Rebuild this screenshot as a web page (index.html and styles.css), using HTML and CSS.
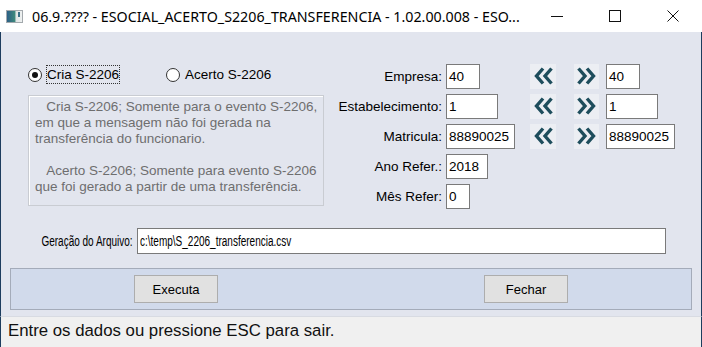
FILE: index.html
```html
<!DOCTYPE html>
<html lang="pt">
<head>
  <meta charset="UTF-8">
  <title>ESOCIAL_ACERTO_S2206_TRANSFERENCIA</title>
  <link rel="stylesheet" href="styles.css">
</head>
<body>
  <div class="window">
    <div class="titlebar">
      <span class="app-icon"><span class="icon-bar"></span></span>
      <span class="title">06.9.???? - ESOCIAL_ACERTO_S2206_TRANSFERENCIA - 1.02.00.008 - ESO...</span>
      <div class="caption-btns">
        <span class="cap-btn">
          <svg width="12" height="12" viewBox="0 0 12 12"><path d="M0 6.5h12" stroke="#111" stroke-width="1"/></svg>
        </span>
        <span class="cap-btn">
          <svg width="12" height="12" viewBox="0 0 12 12"><rect x="0.5" y="0.5" width="11" height="11" fill="none" stroke="#111" stroke-width="1"/></svg>
        </span>
        <span class="cap-btn">
          <svg width="12" height="12" viewBox="0 0 12 12"><path d="M0.5 0.5l11 11M11.5 0.5l-11 11" stroke="#111" stroke-width="1"/></svg>
        </span>
      </div>
    </div>

    <div class="client">
      <div class="top">
        <div class="left">
          <div class="radios">
            <label class="radio">
              <span class="dot checked"></span>
              <span class="radio-text focus">Cria S-2206</span>
            </label>
            <label class="radio">
              <span class="dot"></span>
              <span class="radio-text">Acerto S-2206</span>
            </label>
          </div>
          <div class="memo">
            <p>&nbsp;&nbsp;&nbsp;Cria S-2206; Somente para o evento S-2206,<br>em que a mensagem não foi gerada na<br>transferência do funcionario.</p>
            <p>&nbsp;&nbsp;&nbsp;Acerto S-2206; Somente para evento S-2206<br>que foi gerado a partir de uma transferência.</p>
          </div>
        </div>

        <div class="form">
          <span class="lbl">Empresa:</span>
          <span class="field w34">40</span>
          <span class="arrow prev"><svg width="21" height="18" viewBox="0 0 21 18"><path d="M10 1.5L3.5 9l6.5 7.5M18.5 1.5L12 9l6.5 7.5" fill="none" stroke="#1e4d5c" stroke-width="3.4"/></svg></span>
          <span class="arrow next"><svg width="21" height="18" viewBox="0 0 21 18"><path d="M2.5 1.5L9 9l-6.5 7.5M11 1.5L17.5 9 11 16.5" fill="none" stroke="#1e4d5c" stroke-width="3.4"/></svg></span>
          <span class="field to w34">40</span>

          <span class="lbl">Estabelecimento:</span>
          <span class="field w52">1</span>
          <span class="arrow prev"><svg width="21" height="18" viewBox="0 0 21 18"><path d="M10 1.5L3.5 9l6.5 7.5M18.5 1.5L12 9l6.5 7.5" fill="none" stroke="#1e4d5c" stroke-width="3.4"/></svg></span>
          <span class="arrow next"><svg width="21" height="18" viewBox="0 0 21 18"><path d="M2.5 1.5L9 9l-6.5 7.5M11 1.5L17.5 9 11 16.5" fill="none" stroke="#1e4d5c" stroke-width="3.4"/></svg></span>
          <span class="field to w52">1</span>

          <span class="lbl">Matricula:</span>
          <span class="field w69">88890025</span>
          <span class="arrow prev"><svg width="21" height="18" viewBox="0 0 21 18"><path d="M10 1.5L3.5 9l6.5 7.5M18.5 1.5L12 9l6.5 7.5" fill="none" stroke="#1e4d5c" stroke-width="3.4"/></svg></span>
          <span class="arrow next"><svg width="21" height="18" viewBox="0 0 21 18"><path d="M2.5 1.5L9 9l-6.5 7.5M11 1.5L17.5 9 11 16.5" fill="none" stroke="#1e4d5c" stroke-width="3.4"/></svg></span>
          <span class="field to w69">88890025</span>

          <span class="lbl">Ano Refer.:</span>
          <span class="field w42">2018</span>
          <span class="filler"></span>

          <span class="lbl">Mês Refer:</span>
          <span class="field w24">0</span>
          <span class="filler"></span>
        </div>
      </div>

      <div class="file-row">
        <span class="file-lbl"><span class="narrow right">Geração do Arquivo:</span></span>
        <span class="field file"><span class="narrow">c:\temp\S_2206_transferencia.csv</span></span>
      </div>

      <div class="btn-panel">
        <button class="btn">Executa</button>
        <button class="btn">Fechar</button>
      </div>
    </div>

    <div class="status">Entre os dados ou pressione ESC para sair.</div>
  </div>
</body>
</html>
```

FILE: styles.css
```css
body {
  margin: 0;
  font-family: "Liberation Sans", Arial, sans-serif;
}

.window {
  width: 702px;
  height: 347px;
  display: flex;
  flex-direction: column;
  overflow: hidden;
}

/* Title bar */
.titlebar {
  height: 32px;
  background: #fff;
  display: flex;
  align-items: center;
  flex-shrink: 0;
}

.app-icon {
  width: 15px;
  height: 11px;
  margin-left: 6px;
  margin-right: 9px;
  border: 1px solid #a3a9ad;
  background: linear-gradient(90deg, #2c5f86 0%, #3f8a7c 55%, #dfe4e4 58%, #eef1f1 100%);
  position: relative;
}

.icon-bar {
  position: absolute;
  right: 2px;
  top: 1px;
  width: 2px;
  height: 5px;
  background: #3a6f86;
}

.title {
  font-family: "Noto Sans", sans-serif;
  font-size: 14.25px;
  color: #000;
  white-space: nowrap;
}

.caption-btns {
  margin-left: auto;
  display: flex;
  height: 100%;
}

.cap-btn {
  width: 58px;
  display: flex;
  align-items: center;
  justify-content: center;
}

/* Client area */
.client {
  flex: 1;
  background: #e2e5ee;
  border-left: 1px solid #1d3d5e;
  border-right: 1px solid #1d3d5e;
  display: flex;
  flex-direction: column;
  font-size: 13.5px;
  color: #000;
}

.top {
  display: flex;
  padding-top: 32px;
}

.left {
  width: 296px;
  margin-left: 27px;
}

.radios {
  display: flex;
  height: 21px;
  align-items: center;
}

.radio {
  display: flex;
  align-items: center;
}

.radio + .radio {
  margin-left: 46px;
}

.dot {
  width: 12px;
  height: 12px;
  border: 1px solid #333;
  border-radius: 50%;
  background: #fff;
  position: relative;
  margin-right: 4px;
}

.dot.checked::after {
  content: "";
  position: absolute;
  left: 3px;
  top: 3px;
  width: 6px;
  height: 6px;
  border-radius: 50%;
  background: #111;
}

.radio-text {
  padding: 1px 0;
  border: 1px dotted transparent;
}

.radio-text.focus {
  border-color: #333;
}

.memo {
  margin-top: 10px;
  height: 111px;
  box-sizing: border-box;
  border: 1px solid #c9ccd2;
  box-shadow: inset 1px 1px 0 #fff;
  padding: 3px 6px 0 6px;
  color: #6e6e6e;
  line-height: 16px;
  white-space: nowrap;
}

.memo p {
  margin: 0 0 16px 0;
}

/* Right form */
.form {
  margin-left: 7px;
  display: grid;
  grid-template-columns: 115px 84px 26px 43px auto;
  grid-auto-rows: 24px;
  row-gap: 6px;
  align-items: center;
}

.lbl {
  text-align: right;
  padding-right: 4px;
  white-space: nowrap;
}

.field {
  box-sizing: border-box;
  height: 25px;
  background: #fff;
  border: 1px solid #7a7a7a;
  padding: 0 2px;
  line-height: 23px;
  white-space: nowrap;
}

.form .field {
  justify-self: start;
}

.form .field.to {
  margin-left: 7px;
}

.w34 { width: 34px; }
.w52 { width: 52px; }
.w69 { width: 69px; }
.w42 { width: 42px; }
.w24 { width: 24px; }

.arrow {
  height: 25px;
  background: #eceef3;
  display: flex;
  align-items: center;
  justify-content: center;
}

.arrow.prev {
  width: 26px;
}

.arrow.next {
  width: 25px;
  justify-self: end;
}

.filler {
  grid-column: 3 / 6;
}

/* File row (narrow system font) */
.file-row {
  display: flex;
  align-items: center;
  margin-top: 20px;
  height: 26px;
  font-size: 14px;
}

.file-lbl {
  width: 132px;
  text-align: right;
  padding-right: 4px;
  white-space: nowrap;
}

.narrow {
  display: inline-block;
  transform: scaleX(0.715);
  transform-origin: left center;
}

.narrow.right {
  transform-origin: right center;
}

.field.file {
  width: 529px;
  height: 26px;
  line-height: 24px;
}

/* Button panel */
.btn-panel {
  margin: 14px 9px 0 9px;
  height: 42px;
  box-sizing: border-box;
  background: #d1daeb;
  border: 1px solid #a4abb9;
  display: flex;
  align-items: center;
  padding-left: 123px;
}

.btn {
  width: 84px;
  height: 28px;
  background: #e1e1e1;
  border: 1px solid #adadad;
  font-family: "Liberation Sans", Arial, sans-serif;
  font-size: 13px;
  color: #000;
  padding: 0;
}

.btn + .btn {
  margin-left: 266px;
}

/* Status bar */
.status {
  height: 30px;
  flex-shrink: 0;
  background: #f0f0f0;
  border-top: 1px solid #d8dbe2;
  border-left: 1px solid #1d3d5e;
  border-right: 1px solid #1d3d5e;
  padding-left: 7px;
  font-size: 16.8px;
  line-height: 28px;
  color: #111;
}
```
